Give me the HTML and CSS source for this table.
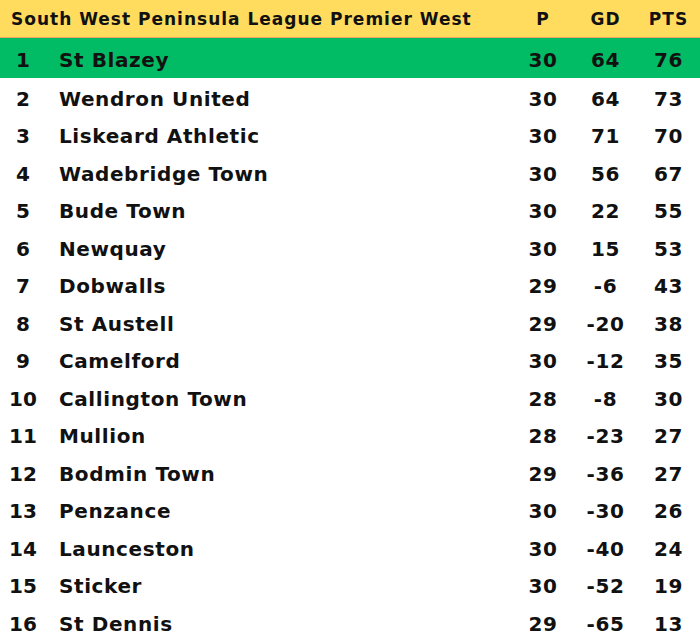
FILE: index.html
```html
<!DOCTYPE html>
<html lang="en">
<head>
<meta charset="utf-8">
<title>South West Peninsula League Premier West</title>
<link rel="stylesheet" href="styles.css">
</head>
<body>
<div class="table">
  <div class="row head">
    <div class="title">South West Peninsula League Premier West</div>
    <div class="num">P</div>
    <div class="num">GD</div>
    <div class="num">PTS</div>
  </div>
  <div class="row top"><div class="rank">1</div><div class="name">St Blazey</div><div class="num">30</div><div class="num">64</div><div class="num">76</div></div>
  <div class="row"><div class="rank">2</div><div class="name">Wendron United</div><div class="num">30</div><div class="num">64</div><div class="num">73</div></div>
  <div class="row"><div class="rank">3</div><div class="name">Liskeard Athletic</div><div class="num">30</div><div class="num">71</div><div class="num">70</div></div>
  <div class="row"><div class="rank">4</div><div class="name">Wadebridge Town</div><div class="num">30</div><div class="num">56</div><div class="num">67</div></div>
  <div class="row"><div class="rank">5</div><div class="name">Bude Town</div><div class="num">30</div><div class="num">22</div><div class="num">55</div></div>
  <div class="row"><div class="rank">6</div><div class="name">Newquay</div><div class="num">30</div><div class="num">15</div><div class="num">53</div></div>
  <div class="row"><div class="rank">7</div><div class="name">Dobwalls</div><div class="num">29</div><div class="num">-6</div><div class="num">43</div></div>
  <div class="row"><div class="rank">8</div><div class="name">St Austell</div><div class="num">29</div><div class="num">-20</div><div class="num">38</div></div>
  <div class="row"><div class="rank">9</div><div class="name">Camelford</div><div class="num">30</div><div class="num">-12</div><div class="num">35</div></div>
  <div class="row"><div class="rank">10</div><div class="name">Callington Town</div><div class="num">28</div><div class="num">-8</div><div class="num">30</div></div>
  <div class="row"><div class="rank">11</div><div class="name">Mullion</div><div class="num">28</div><div class="num">-23</div><div class="num">27</div></div>
  <div class="row"><div class="rank">12</div><div class="name">Bodmin Town</div><div class="num">29</div><div class="num">-36</div><div class="num">27</div></div>
  <div class="row"><div class="rank">13</div><div class="name">Penzance</div><div class="num">30</div><div class="num">-30</div><div class="num">26</div></div>
  <div class="row"><div class="rank">14</div><div class="name">Launceston</div><div class="num">30</div><div class="num">-40</div><div class="num">24</div></div>
  <div class="row"><div class="rank">15</div><div class="name">Sticker</div><div class="num">30</div><div class="num">-52</div><div class="num">19</div></div>
  <div class="row"><div class="rank">16</div><div class="name">St Dennis</div><div class="num">29</div><div class="num">-65</div><div class="num">13</div></div>
</div>
</body>
</html>
```
FILE: styles.css
```css
html, body {
  margin: 0;
  padding: 0;
  background: #ffffff;
}
body {
  font-family: "DejaVu Sans", "Open Sans", sans-serif;
  color: #111111;
  width: 700px;
  height: 640px;
  overflow: hidden;
}
.table {
  display: flex;
  flex-direction: column;
}
.row {
  display: grid;
  grid-template-columns: 46px 1fr 62px 63px 63px;
  align-items: center;
  height: 37.5px;
  font-size: 20px;
  font-weight: 700;
  letter-spacing: 0.6px;
  padding-top: 4px;
  box-sizing: border-box;
}
.row.head {
  height: 38px;
  padding-top: 1px;
  background: #ffdc5e;
  border-bottom: 1px solid #eea463;
  font-size: 17px;
  font-weight: 700;
  letter-spacing: 1px;
}
.row.top {
  height: 40px;
  background: #01bb65;
}
.title {
  grid-column: 1 / 3;
  padding-left: 11px;
  white-space: nowrap;
}
.rank {
  text-align: center;
  letter-spacing: 0;
}
.name {
  padding-left: 13px;
  white-space: nowrap;
}
.num {
  text-align: center;
}
```
